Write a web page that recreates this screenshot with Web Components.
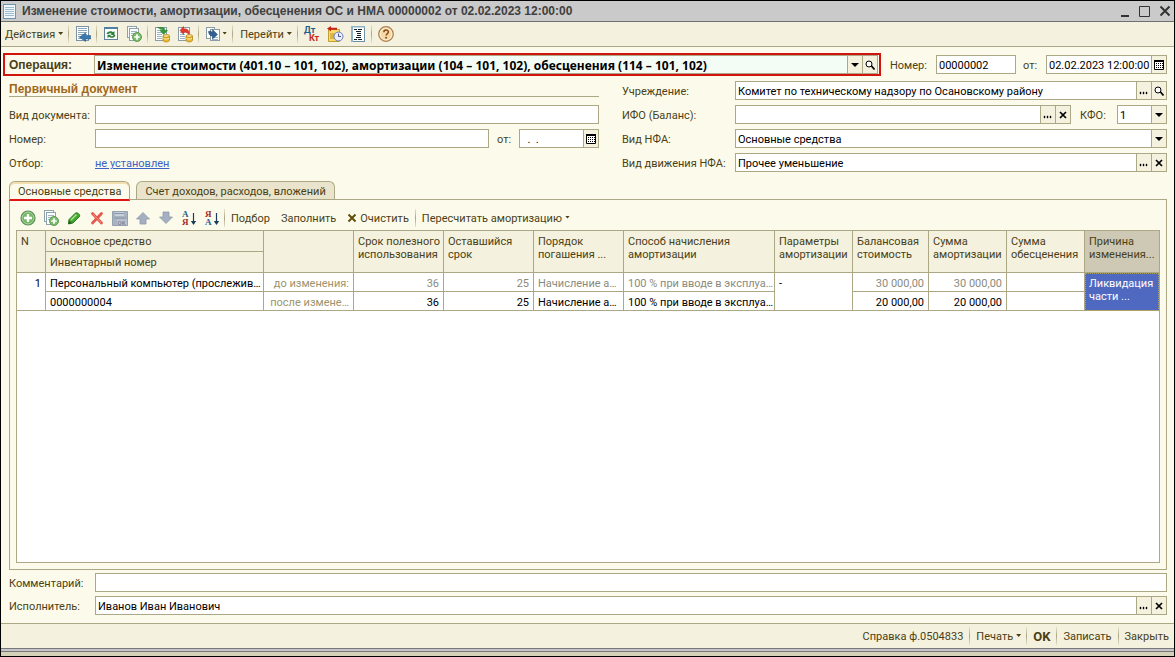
<!DOCTYPE html>
<html lang="ru">
<head>
<meta charset="utf-8">
<title>Изменение стоимости, амортизации, обесценения ОС и НМА</title>
<style>
  html, body { margin: 0; }
  body {
    --line: #aca885;
    --face: #f4f1de;
    --paper: #fcfbeb;
    --ink: #4a3f16;
    font: 11px/13px Roboto, "Liberation Sans", sans-serif;
    color: var(--ink);
  }
  .operation {
    flex: 1;
    border: 2px solid #d2140f;
    padding: 0 1px 0 4px;
    --label-width: 85px;
    --field-bg: #f3fdf6;
    --field-font: bold 12px/15px "Noto Sans", "Liberation Sans", sans-serif;
    --label-font: bold 12px/15px "Liberation Sans", sans-serif;
  }
  .grow { flex: 1; }
  .number { --label-width: 46px; --box-width: 80px; margin-left: 9px; }
  .date { --label-width: 23px; --box-width: 121px; margin-left: 7px; }
  .from { --label-width: 22px; --box-width: 80px; margin-left: 8px; }
  .kfo { --label-width: 37px; --box-width: 50px; margin-left: 9px; }
  .left, .wide { --label-width: 86px; }
  .right { --label-width: 113px; }
</style>
</head>
<body>
<doc-window heading="Изменение стоимости, амортизации, обесценения ОС и НМА 00000002 от 02.02.2023 12:00:00">
  <tool-bar slot="toolbar" label="Действия документа">
    <tool-button menu>Действия</tool-button>
    <tool-sep></tool-sep>
    <tool-button icon="goto" label="Найти в списке"></tool-button>
    <tool-sep></tool-sep>
    <tool-button icon="refresh" label="Обновить"></tool-button>
    <tool-button icon="copy" label="Скопировать"></tool-button>
    <tool-sep></tool-sep>
    <tool-button icon="post" label="Провести"></tool-button>
    <tool-button icon="unpost" label="Отменить проведение"></tool-button>
    <tool-sep></tool-sep>
    <tool-button icon="based" label="Ввести на основании" menu></tool-button>
    <tool-sep></tool-sep>
    <tool-button menu>Перейти</tool-button>
    <tool-sep></tool-sep>
    <tool-button icon="dtkt" label="Проводки"></tool-button>
    <tool-button icon="journal" label="Журнал"></tool-button>
    <tool-button icon="form" label="Форма"></tool-button>
    <tool-sep></tool-sep>
    <tool-button icon="help" label="Справка"></tool-button>
  </tool-bar>

  <field-row slot="operation">
    <form-field class="operation" label="Операция:" kind="select" value="Изменение стоимости (401.10 – 101, 102), амортизации (104 – 101, 102), обесценения (114 – 101, 102)" actions="drop search"></form-field>
    <form-field class="number" label="Номер:" value="00000002"></form-field>
    <form-field class="date" label="от:" value="02.02.2023 12:00:00" actions="calendar"></form-field>
  </field-row>

  <form-columns slot="fields">
    <field-stack class="left" slot="start">
      <group-title>Первичный документ</group-title>
      <form-field label="Вид документа:" value=""></form-field>
      <field-row>
        <form-field class="grow" label="Номер:" value=""></form-field>
        <form-field class="from" label="от:" value="  .  ." actions="calendar"></form-field>
      </field-row>
      <filter-link label="Отбор:">не установлен</filter-link>
    </field-stack>
    <field-stack class="right" slot="end">
      <form-field label="Учреждение:" value="Комитет по техническому надзору по Осановскому району" actions="dots search"></form-field>
      <field-row>
        <form-field class="grow" label="ИФО (Баланс):" value="" actions="dots clear"></form-field>
        <form-field class="kfo" label="КФО:" kind="select" value="1" actions="drop"></form-field>
      </field-row>
      <form-field label="Вид НФА:" kind="select" value="Основные средства" actions="drop"></form-field>
      <form-field label="Вид движения НФА:" value="Прочее уменьшение" actions="dots clear"></form-field>
    </field-stack>
  </form-columns>

  <tab-panel slot="tabs" tabs="Основные средства|Счет доходов, расходов, вложений">
    <tool-bar class="inner" label="Действия таблицы">
      <tool-button icon="add" label="Добавить"></tool-button>
      <tool-button icon="copy" label="Скопировать строку"></tool-button>
      <tool-button icon="edit" label="Изменить"></tool-button>
      <tool-button icon="delete" label="Удалить"></tool-button>
      <tool-button icon="save" label="Закончить редактирование"></tool-button>
      <tool-button icon="up" label="Вверх"></tool-button>
      <tool-button icon="down" label="Вниз"></tool-button>
      <tool-button icon="asc" label="По возрастанию"></tool-button>
      <tool-button icon="desc" label="По убыванию"></tool-button>
      <tool-sep></tool-sep>
      <tool-button>Подбор</tool-button>
      <tool-button>Заполнить</tool-button>
      <tool-button icon="cross">Очистить</tool-button>
      <tool-sep></tool-sep>
      <tool-button menu>Пересчитать амортизацию</tool-button>
    </tool-bar>
    <asset-table></asset-table>
  </tab-panel>

  <field-stack class="wide" slot="bottom">
    <form-field label="Комментарий:" value=""></form-field>
    <form-field label="Исполнитель:" value="Иванов Иван Иванович" actions="dots clear"></form-field>
  </field-stack>

  <tool-bar slot="footer" class="commands" label="Команды формы">
    <tool-button>Справка ф.0504833</tool-button>
    <tool-sep></tool-sep>
    <tool-button menu>Печать</tool-button>
    <tool-sep></tool-sep>
    <tool-button strong>OK</tool-button>
    <tool-sep></tool-sep>
    <tool-button>Записать</tool-button>
    <tool-sep></tool-sep>
    <tool-button>Закрыть</tool-button>
  </tool-bar>
</doc-window>

<script>
const sheet = (x, y, w, h, stroke = '#7d93a3', fill = '#fdfefe') =>
  `<rect x="${x + .5}" y="${y + .5}" width="${w}" height="${h}" fill="${fill}" stroke="${stroke}"/>`;
const lines = (x, w, ys, c = '#9fb4c2') =>
  ys.map(y => `<path d="M${x} ${y + .5}h${w}" stroke="${c}"/>`).join('');
const coins = '<path d="M9 10v4c0 2.600 6.500 2.600 6.500 0v-4z" fill="#e8b62f" stroke="#b98512" stroke-width=".8"/><ellipse cx="12.250" cy="10" rx="3.200" ry="1.400" fill="#fbe48a" stroke="#b98512" stroke-width=".8"/><path d="M9.500 12.300c1.500 1 4 1 5.500 0" fill="none" stroke="#fff0a8"/>';
const plusBadge = '<circle cx="11" cy="11" r="4.500" fill="#7dbd6c" stroke="#4b8a43" stroke-width=".8"/><path d="M11 8.300v5.400M8.300 11h5.400" stroke="#fff" stroke-width="1.700"/>';
const sortArrow = '<path d="M12.500 3v10" stroke="#1d3c58" stroke-width="1.200"/><path d="M9.800 11h5.400l-2.700 4z" fill="#1d3c58"/>';
const sortLetters = (top, topColor, bottom, bottomColor) =>
  `<g font-size="9" font-weight="bold" font-family="Liberation Serif"><text x="1" y="7" fill="${topColor}">${top}</text><text x="1" y="15" fill="${bottomColor}">${bottom}</text></g>`;
const ICONS = {
  goto: sheet(1, 0, 12, 14) + lines(3, 9, [2, 4, 6, 8, 10, 12], '#8aa7bd') + '<path d="M15.500 9.500v3.500h-5v2.500L4.500 11.200 10.500 7v2.500z" fill="#3b78ae" stroke="#245a88" stroke-width=".6"/>',
  refresh: sheet(1, 1, 13, 12, '#5f8398') + '<path d="M1 1h14v2H1z" fill="#4f809f"/><path d="M3.500 8c.6-3 5-3.600 6.500-1.700L11.500 5v4H7.800l1-1.200c-1.200-1-3-.6-3.300.2zM12.500 9c-.5 3-5 3.700-6.500 1.800l-1.500 1.400V8.800h3.700l-1 1c1.200 1 3 .2 3.300-.8z" fill="#2c8038"/>',
  copy: sheet(1, 0, 9, 11, '#8ea2ad') + sheet(3, 2, 9, 12, '#8ea2ad') + lines(5, 6, [5, 7, 9]) + plusBadge,
  post: sheet(1, 1, 11, 13, '#8b9ca6') + lines(3, 5, [4, 6, 8, 10, 12]) + '<path d="M3.500 1.500h4c2.500 0 3.500 1 3.500 3h2.500L9.700 8.500 6 4.500h2.500c0-1-.8-1.200-1.800-1.200z" fill="#2f9a35" stroke="#1f7626" stroke-width=".5"/>' + coins,
  unpost: sheet(1, 1, 11, 13, '#8b9ca6') + lines(3, 5, [6, 8, 10, 12]) + '<path d="M3 4.500 6.500.5v2.300c4.500 0 6 1.700 5.500 6.200-1.200-2.200-2.200-3-5.500-2.800v2.300z" fill="#e23b2b" stroke="#b32419" stroke-width=".5"/>' + coins,
  based: sheet(1, 1, 8, 11, '#8b9ca6') + sheet(5, 3, 9, 11, '#8b9ca6') + lines(7, 6, [11, 13]) + '<path d="M3.500 5.500c2-.5 3 0 4 1V3.500l5 5-5 4.500v-3C5.500 10 4 9 3.500 5.500z" fill="#2f5f94" stroke="#1f4570" stroke-width=".5"/>',
  dtkt: '<text x="0" y="7" font-size="9" font-weight="bold" fill="#1d5c8c">Дт</text><text x="5" y="15" font-size="9" font-weight="bold" fill="#c22b1f">Кт</text>',
  journal: '<path d="M1.500 3.500h11v12h-11z" fill="#fbdc6b" stroke="#c69c2e"/><path d="M3 8h5M3 10h4M3 12h4" stroke="#b98f27"/><path d="M0 2.500 4 0v1.700h6v2H4V5.500z" fill="#c52318"/><circle cx="11.500" cy="10.500" r="4.500" fill="#e9eefb" stroke="#6e79ac"/><path d="M11.500 7.500v3H14" fill="none" stroke="#4b5590"/>',
  form: sheet(1, 0, 13, 15, '#6f91a5') + '<path d="M1 0h14v1.500H1zM1 0h2v16H1z" fill="#8fb3c7"/><path d="M4 3.500h3M8 3.500h4M6 5.500h5M7 7.500h4M7 9.500h4M6 11.500h5M4 13.500h3M8 13.500h4" stroke="#15202b"/>',
  help: '<circle cx="8" cy="8" r="7.300" fill="#f6d9a9" stroke="#ab7d4f" stroke-width="1.200"/><circle cx="8" cy="8" r="5.800" fill="none" stroke="#fdf1da" stroke-width=".8"/><path d="M5.800 6.200c0-3 4.600-2.900 4.600-.2 0 1.600-2.200 1.600-2.200 3.600" fill="none" stroke="#8a4a12" stroke-width="1.500"/><circle cx="8.100" cy="11.800" r="1" fill="#8a4a12"/>',
  add: '<circle cx="8" cy="8" r="7" fill="#74b866" stroke="#5c8a5a" stroke-width="1.200"/><circle cx="8" cy="8" r="5.900" fill="none" stroke="#b3dba8" stroke-width=".8"/><path d="M8 4v8M4 8h8" stroke="#fff" stroke-width="2.400"/>',
  edit: '<path d="m2.500 14 .5-4.500 6.500-6.500c1.500-1 5 1.500 4 3.500L7 13z" fill="#43a82f" stroke="#23701a" stroke-width=".9"/><path d="m5 10 5.500-5.500" stroke="#a5e08e" stroke-width="1.600"/><path d="m2.500 14 .3-3.500L6 13.200z" fill="#245d1d"/>',
  delete: '<path d="m3.500 3.500 9 9.500M12.500 3.500l-9 9.500" stroke="#e4594c" stroke-width="2.800" stroke-linecap="round"/><path d="m4 4 8 8.500" stroke="#f29a8c" stroke-width=".8"/>',
  save: '<path d="M.5 1.500h15v14H.5z" fill="#a8b3c1" stroke="#95a0b0"/><path d="M3 2h9v4H3z" fill="#c8d0da"/><path d="M3 3.500h9M2 8h12" stroke="#8996a8"/><path d="M5 9.500h10v5.500H5z" fill="#bcc5d0"/><text x="5.500" y="14.500" font-size="6" font-weight="bold" fill="#7c899b">OK</text>',
  up: '<path d="M8 2.500 14.500 9H11v5H5V9H1.500z" fill="#a4afc0" stroke="#8f9bad" stroke-width=".8"/>',
  down: '<path d="M8 13.500 14.500 7H11V2H5v5H1.500z" fill="#a4afc0" stroke="#8f9bad" stroke-width=".8"/>',
  asc: sortLetters('А', '#26608f', 'Я', '#a32a2a') + sortArrow,
  desc: sortLetters('Я', '#a32a2a', 'А', '#26608f') + sortArrow,
  cross: '<path d="m4.500 4.500 7 7M11.500 4.500l-7 7" stroke="#5d4d05" stroke-width="1.900"/>',
  doc: sheet(1, 1, 12, 14, '#6f93aa', '#eef6fb') + lines(3, 9, [4, 6, 8, 10, 12], '#9dbccd'),
  min: '<path d="M4 13h8" stroke="#333" stroke-width="2"/>',
  max: '<path d="M2.500 3.500h10v10h-10z" fill="none" stroke="#333"/>',
  close: '<path d="m3.500 3.500 9 9M12.500 3.500l-9 9" stroke="#333" stroke-width="2"/>',
  drop: '<path d="M4 6h8l-4 4z" fill="#000"/>',
  search: '<circle cx="7" cy="7" r="3" fill="#fff" stroke="#000"/><path d="m9.500 9 3 3.500" stroke="#000" stroke-width="1.800"/>',
  dots: '<path d="M4 9h1v2H4zM7 9h1v2H7zM10 9h1v2h-1z" fill="#000" stroke="#000" stroke-width=".4"/>',
  clear: '<path d="m5 5 6 6M11 5l-6 6" stroke="#000" stroke-width="1.700"/>',
  calendar: '<path d="M3.500 3.500h9v9h-9z" fill="#fff" stroke="#000"/><path d="M3 4h10" stroke="#000" stroke-width="2"/><path d="M5 6.500h7M5 8.500h7M5 10.500h7" stroke="#000" stroke-dasharray="1 1"/>'
};
const icon = (name, size = 16) => {
  const inset = (16 - size) / 2;
  return `<svg viewBox="${inset} ${inset} ${size} ${size}" width="${size}" height="${size}" aria-hidden="true">${ICONS[name]}</svg>`;
};
const ACTION_NAMES = { drop: 'Раскрыть', search: 'Открыть', dots: 'Выбрать', clear: 'Очистить', calendar: 'Календарь' };

class ShadowElement extends HTMLElement {
  connectedCallback() {
    if (this.shadowRoot) return;
    this.attachShadow({ mode: 'open' }).innerHTML =
      `<style>*{box-sizing:border-box}svg{display:block;flex:none;overflow:visible}${this.css()}</style>${this.html()}`;
  }
  attr(name) { return this.getAttribute(name) || ''; }
  css() { return ''; }
  html() { return '<slot></slot>'; }
}

customElements.define('doc-window', class extends ShadowElement {
  css() { return `
    :host { display: flex; flex-direction: column; box-sizing: border-box; min-height: 100vh; border: 1px solid #000; background: var(--paper); }
    header { display: flex; align-items: center; height: 21px; padding: 0 1px; background: #cacaca; border-bottom: 1px solid #6f6f6f; color: #404040; }
    h1 { flex: 1; margin: 0 0 0 4px; padding-top: 1px; font: bold 12px/15px "Liberation Sans", sans-serif; }
    header button { border: 0; padding: 0; margin-left: 4px; background: none; }
    .bar { background: var(--face); height: 25px; border-bottom: 1px solid var(--line); }
    main { flex: 1; display: flex; flex-direction: column; padding: 6px 7px 8px 8px; }
    .operation { margin: 0 0 5px -6px; }
    .tabs { flex: 1; display: flex; margin: 9px 0 3px; }
    .tabs ::slotted(*) { flex: 1; }
    footer { background: var(--face); height: 25px; border-top: 1px solid var(--line); }
    .edge { height: 8px; border-top: 1px solid #77777a; background: linear-gradient(#c6c6ca 2px, #77777a 2px 3px, #d5d0b8 3px); }`; }
  html() { return `
    <header>${icon('doc')}<h1>${this.attr('heading')}</h1>
      <button aria-label="Свернуть">${icon('min')}</button><button aria-label="Развернуть">${icon('max')}</button><button aria-label="Закрыть">${icon('close')}</button></header>
    <div class="bar"><slot name="toolbar"></slot></div>
    <main>
      <div class="operation"><slot name="operation"></slot></div>
      <slot name="fields"></slot>
      <div class="tabs"><slot name="tabs"></slot></div>
      <slot name="bottom"></slot>
    </main>
    <footer><slot name="footer"></slot></footer><div class="edge"></div>`; }
});

customElements.define('tool-bar', class extends ShadowElement {
  css() { return `
    :host { display: block; }
    :host(.inner) { --sep-margin: 0; --text-pad: 5px; }
    :host(.commands) { --sep-margin: 0 1px; }
    div { display: flex; align-items: center; gap: 1px; height: 24px; }
    :host(.inner) div { height: 25px; padding-left: 1px; }
    :host(.commands) div { justify-content: flex-end; padding-right: 1px; }`; }
  html() { return `<div role="toolbar" aria-label="${this.attr('label')}"><slot></slot></div>`; }
});

customElements.define('tool-sep', class extends ShadowElement {
  css() { return `:host { display: block; width: 1px; height: 18px; margin: var(--sep-margin, 0 2px 0 1px); background: linear-gradient(#e8e4cc, #a9a583, #e8e4cc); }`; }
  html() { return ''; }
});

customElements.define('tool-button', class extends ShadowElement {
  css() { return `
    :host { display: block; }
    button { display: flex; align-items: center; gap: 3px; height: 22px; padding: 1px var(--text-pad, 4px) 0; border: 0; background: none; font: inherit; color: inherit; white-space: nowrap; }
    :host([menu]) button { padding-right: 3px; }
    :host([strong]) button { font-weight: bold; font-size: 13px; }
    .icon { padding: 0 3px; gap: 0; }
    .arrow { width: 5px; height: 3px; margin-bottom: 2px; background: #4a3f16; clip-path: polygon(0 0, 100% 0, 50% 100%); }
    .icon .arrow { margin-left: 1px; }`; }
  html() {
    const name = this.attr('icon'), label = this.attr('label');
    return `<button class="${label ? 'icon' : ''}" ${label ? `aria-label="${label}"` : ''}>${name ? icon(name, label ? 16 : 10) : ''}${label ? '' : '<slot></slot>'}${this.hasAttribute('menu') ? '<span class="arrow"></span>' : ''}</button>`;
  }
});

customElements.define('field-row', class extends ShadowElement {
  css() { return `:host { display: flex; align-items: center; height: 19px; }:host([slot=operation]) { height: 23px; }`; }
});
customElements.define('field-stack', class extends ShadowElement {
  css() { return `:host { display: flex; flex-direction: column; gap: 5px; }:host(.wide) { gap: 4px; }`; }
});
customElements.define('form-columns', class extends ShadowElement {
  css() { return `:host { display: grid; grid-template-columns: minmax(0, 590fr) minmax(0, 545fr); column-gap: 23px; }`; }
  html() { return '<slot name="start"></slot><slot name="end"></slot>'; }
});

customElements.define('group-title', class extends ShadowElement {
  css() { return `
    :host { display: block; height: 19px; }
    h2 { margin: 0; height: 16px; padding-top: 1px; border-bottom: 1px solid var(--line); font: bold 12px/15px "Liberation Sans", sans-serif; color: #a0671a; }`; }
  html() { return '<h2><slot></slot></h2>'; }
});

customElements.define('form-field', class extends ShadowElement {
  css() { return `
    :host { display: flex; align-items: center; }
    label { flex: none; width: var(--label-width); padding-top: 2px; font: var(--label-font, inherit); white-space: nowrap; }
    .box { display: flex; flex: 1 1 auto; min-width: 0; height: 19px; border: 1px solid var(--line); background: var(--field-bg, #fff); }
    :host(.number) .box, :host(.date) .box, :host(.from) .box, :host(.kfo) .box { flex: none; width: var(--box-width); }
    input, select { flex: 1; min-width: 0; width: 0; height: 17px; border: 0; border-radius: 0; margin: 0; padding: 2px 0 0 2px; background: none; font: var(--field-font, inherit); color: #000; appearance: none; outline: 0; }
    .act { display: flex; justify-content: center; align-items: center; flex: none; width: 15px; height: 17px; padding: 0; border: 0; border-left: 1px solid var(--line); background: var(--face); }`; }
  html() {
    const v = this.attr('value');
    const control = this.attr('kind') === 'select'
      ? `<select id="c"><option>${v}</option></select>` : `<input id="c" type="text" value="${v}">`;
    const acts = this.attr('actions').split(' ').filter(Boolean)
      .map(a => a === 'drop' ? `<span class="act">${icon(a, 14)}</span>` : `<button class="act" aria-label="${ACTION_NAMES[a]}">${icon(a, 14)}</button>`).join('');
    return `<label for="c">${this.attr('label')}</label><div class="box">${control}${acts}</div>`;
  }
});

customElements.define('filter-link', class extends ShadowElement {
  css() { return `
    :host { display: flex; align-items: center; box-sizing: border-box; height: 19px; padding-top: 2px; }
    span { width: var(--label-width); }
    a { color: #3b62c4; text-decoration: underline; }`; }
  html() { return `<span id="l">${this.attr('label')}</span><a href="#filter" aria-describedby="l"><slot></slot></a>`; }
});

customElements.define('tab-panel', class extends ShadowElement {
  css() { return `
    :host { display: flex; flex-direction: column; }
    nav { display: flex; gap: 6px; height: 19px; z-index: 1; }
    button { height: 18px; padding: 2px 8px 0; border: 1px solid var(--line); border-bottom: 0; border-radius: 6px 6px 0 0; background: #e9e4cb; font: inherit; color: inherit; }
    button[aria-selected=true] { height: 20px; background: var(--paper); border-bottom: 2px solid #e01414; box-shadow: inset 0 2px #f3dfae; }
    section { flex: 1; display: flex; flex-direction: column; border: 1px solid var(--line); margin-top: -1px; padding: 5px 6px 6px; }
    ::slotted(asset-table) { flex: 1; }`; }
  html() { return `<nav role="tablist">${this.attr('tabs').split('|').map((t, i) => `<button role="tab" aria-selected="${i === 0}">${t}</button>`).join('')}</nav>
    <section role="tabpanel"><slot></slot></section>`; }
});

customElements.define('asset-table', class extends ShadowElement {
  css() { return `
    :host { display: block; border: 1px solid var(--line); background: #fff; color: #000; }
    table { width: 100%; table-layout: fixed; border-collapse: separate; border-spacing: 0; }
    th, td { padding: 0 4px; border: solid var(--line); border-width: 0 1px 1px 0; overflow: hidden; white-space: nowrap; vertical-align: middle; }
    th { height: 21px; background: var(--face); color: var(--ink); font-weight: normal; text-align: left; }
    th[rowspan] { padding-top: 4px; vertical-align: top; }
    th.last { background: #cdc9b4; }
    td { height: 19px; padding-top: 2px; }
    .last { border-right: 0; }
    .n { text-align: right; }
    .old { color: #8b8b7c; }
    .note { color: #9c946c; text-align: right; }
    .top { vertical-align: top; padding-top: 4px; }
    .current { background: #4f69c0; color: #fff; outline: 1px dotted #a9a05c; outline-offset: -1px; }`; }
  html() {
    const widths = [29, 0, 90, 90, 90, 90, 151, 78, 76, 78, 78, 74];
    const tall = ['Срок полезного<br>использования', 'Оставшийся<br>срок', 'Порядок<br>погашения ...', 'Способ начисления<br>амортизации', 'Параметры<br>амортизации', 'Балансовая<br>стоимость', 'Сумма<br>амортизации', 'Сумма<br>обесценения'];
    return `<table><colgroup>${widths.map(w => w ? `<col style="width:${w}px">` : '<col>').join('')}</colgroup>
      <thead><tr><th rowspan="2">N</th><th>Основное средство</th><th rowspan="2"></th>${tall.map(t => `<th rowspan="2">${t}</th>`).join('')}<th rowspan="2" class="last">Причина<br>изменения...</th></tr>
      <tr><th>Инвентарный номер</th></tr></thead>
      <tbody><tr><td rowspan="2" class="n top">1</td><td>Персональный компьютер (прослежив…</td><td class="note">до изменения:</td><td class="n old">36</td><td class="n old">25</td><td class="old">Начисление а…</td><td class="old">100 % при вводе в эксплуа…</td><td rowspan="2" class="top">-</td><td class="n old">30 000,00</td><td class="n old">30 000,00</td><td></td><td rowspan="2" class="top last current">Ликвидация<br>части ...</td></tr>
      <tr><td>0000000004</td><td class="note">после измене…</td><td class="n">36</td><td class="n">25</td><td>Начисление а…</td><td>100 % при вводе в эксплуа…</td><td class="n">20 000,00</td><td class="n">20 000,00</td><td></td></tr></tbody></table>`;
  }
});
</script>
</body>
</html>
